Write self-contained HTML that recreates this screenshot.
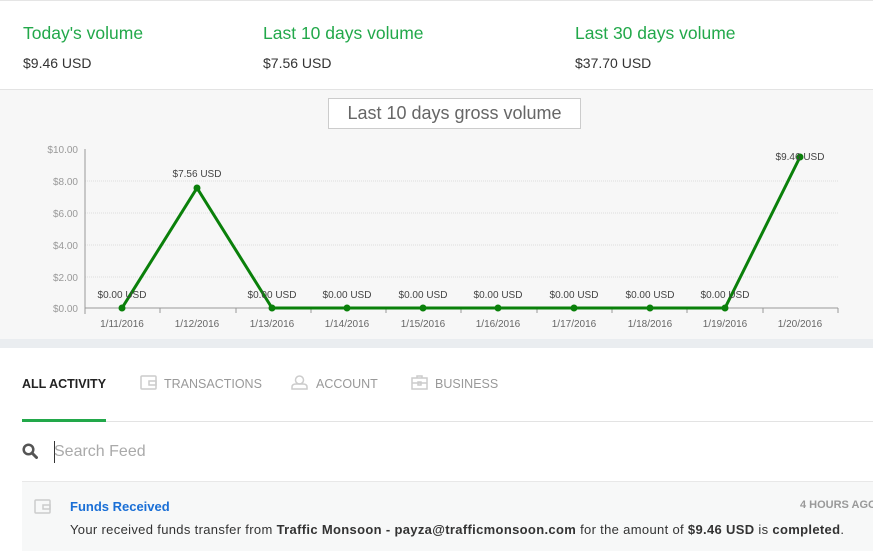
<!DOCTYPE html>
<html><head><style>
*{margin:0;padding:0;box-sizing:border-box}
body{width:873px;height:551px;overflow:hidden;background:#fff;font-family:"Liberation Sans",sans-serif;position:relative}
.a{position:absolute;white-space:nowrap}
.h{color:#22a84a;font-size:17.5px;top:23px}
.v{color:#333;font-size:14px;top:55px}
.tab{top:377px;font-size:12.5px;color:#999}
</style></head><body>
<div style="position:absolute;left:0;top:0;width:873px;height:1px;background:#e5e5e5"></div>
<div class="a h" style="left:23px">Today's volume</div><div class="a v" style="left:23px">$9.46 USD</div>
<div class="a h" style="left:263px">Last 10 days volume</div><div class="a v" style="left:263px">$7.56 USD</div>
<div class="a h" style="left:575px">Last 30 days volume</div><div class="a v" style="left:575px">$37.70 USD</div>
<div style="position:absolute;left:0;top:89px;width:873px;height:250px;background:#f7f7f7;border-top:1px solid #e3e3e3"></div>
<div style="position:absolute;left:0;top:339px;width:873px;height:9px;background:#eaedf0"></div>
<div class="a" style="left:328px;top:98px;width:253px;height:31px;border:1px solid #ccc;background:#fff;color:#666;font-size:18px;text-align:center;line-height:29px">Last 10 days gross volume</div>
<svg class="a" style="left:0;top:0" width="873" height="340" font-family="Liberation Sans,sans-serif" font-size="10">
<g stroke="#ddd" stroke-dasharray="1,1"><line x1="85" x2="838" y1="181" y2="181"/><line x1="85" x2="838" y1="213" y2="213"/><line x1="85" x2="838" y1="245" y2="245"/><line x1="85" x2="838" y1="277" y2="277"/></g>
<g fill="#999" text-anchor="end"><text x="78" y="153">$10.00</text><text x="78" y="185">$8.00</text><text x="78" y="217">$6.00</text><text x="78" y="249">$4.00</text><text x="78" y="281">$2.00</text><text x="78" y="312">$0.00</text></g>
<g stroke="#999"><line x1="85" y1="149" x2="85" y2="314"/><line x1="85" y1="308" x2="838" y2="308"/>
<line x1="160" y1="308" x2="160" y2="313"/><line x1="236" y1="308" x2="236" y2="313"/><line x1="311" y1="308" x2="311" y2="313"/><line x1="386" y1="308" x2="386" y2="313"/><line x1="461" y1="308" x2="461" y2="313"/><line x1="537" y1="308" x2="537" y2="313"/><line x1="612" y1="308" x2="612" y2="313"/><line x1="687" y1="308" x2="687" y2="313"/><line x1="763" y1="308" x2="763" y2="313"/><line x1="838" y1="308" x2="838" y2="313"/></g>
<g fill="#666" text-anchor="middle"><text x="122" y="327">1/11/2016</text><text x="197" y="327">1/12/2016</text><text x="272" y="327">1/13/2016</text><text x="347" y="327">1/14/2016</text><text x="423" y="327">1/15/2016</text><text x="498" y="327">1/16/2016</text><text x="574" y="327">1/17/2016</text><text x="650" y="327">1/18/2016</text><text x="725" y="327">1/19/2016</text><text x="800" y="327">1/20/2016</text></g>
<polyline fill="none" stroke="#0a800a" stroke-width="3" points="122,308 197,188 272,308 347,308 423,308 498,308 574,308 650,308 725,308 800,157"/>
<g fill="#0a800a"><circle cx="122" cy="308" r="3.5"/><circle cx="197" cy="188" r="3.5"/><circle cx="272" cy="308" r="3.5"/><circle cx="347" cy="308" r="3.5"/><circle cx="423" cy="308" r="3.5"/><circle cx="498" cy="308" r="3.5"/><circle cx="574" cy="308" r="3.5"/><circle cx="650" cy="308" r="3.5"/><circle cx="725" cy="308" r="3.5"/><circle cx="800" cy="157" r="3.5"/></g>
<g fill="#444" text-anchor="middle"><text x="122" y="298">$0.00 USD</text><text x="197" y="177">$7.56 USD</text><text x="272" y="298">$0.00 USD</text><text x="347" y="298">$0.00 USD</text><text x="423" y="298">$0.00 USD</text><text x="498" y="298">$0.00 USD</text><text x="574" y="298">$0.00 USD</text><text x="650" y="298">$0.00 USD</text><text x="725" y="298">$0.00 USD</text><text x="800" y="160">$9.46 USD</text></g>
</svg>
<div class="a tab" style="left:22px;color:#222;font-weight:bold">ALL ACTIVITY</div>
<svg class="a" style="left:140px;top:375px" width="17" height="15" fill="none" stroke="#ccc" stroke-width="1.5"><rect x="1" y="1" width="15" height="13" rx="1"/><path d="M9 6h7v4H9z"/></svg>
<div class="a tab" style="left:164px">TRANSACTIONS</div>
<svg class="a" style="left:291px;top:375px" width="17" height="15" fill="none" stroke="#ccc" stroke-width="1.5"><circle cx="8.5" cy="5" r="4"/><path d="M1 14v-2q0-3 4-3h7q4 0 4 3v2z"/></svg>
<div class="a tab" style="left:316px">ACCOUNT</div>
<svg class="a" style="left:411px;top:375px" width="17" height="15" fill="none" stroke="#ccc" stroke-width="1.5"><rect x="1" y="3" width="15" height="11"/><path d="M6 3V1h5v2M1 8h15M7 7h3v3H7z"/></svg>
<div class="a tab" style="left:435px">BUSINESS</div>
<div style="position:absolute;left:22px;top:421px;width:851px;height:1px;background:#e3e3e3"></div>
<div style="position:absolute;left:22px;top:419px;width:84px;height:3px;background:#22a84a"></div>
<svg class="a" style="left:22px;top:443px" width="16" height="16"><circle cx="6.5" cy="6.5" r="4.8" fill="none" stroke="#555" stroke-width="2.5"/><path d="M10 10l4.5 4.5" stroke="#555" stroke-width="3" stroke-linecap="round"/></svg>
<div style="position:absolute;left:54px;top:441px;width:1px;height:22px;background:#333"></div>
<div class="a" style="left:54px;top:443px;font-size:16px;color:#aaa">Search Feed</div>
<div style="position:absolute;left:22px;top:481px;width:851px;height:70px;background:#f7f8f8;border-top:1px solid #e8e8e8"></div>
<svg class="a" style="left:34px;top:499px" width="17" height="15" fill="none" stroke="#ccc" stroke-width="1.5"><rect x="1" y="1" width="15" height="13" rx="1"/><path d="M9 6h7v4H9z"/></svg>
<div class="a" style="left:70px;top:499px;font-size:13px;font-weight:bold;color:#1a6fd6">Funds Received</div>
<div class="a" style="left:800px;top:499px;font-size:11px;font-weight:bold;color:#999">4 HOURS AGO</div>
<div class="a" style="left:70px;top:522px;font-size:13px;color:#333;letter-spacing:0.33px">Your received funds transfer from <b>Traffic Monsoon - payza@trafficmonsoon.com</b> for the amount of <b>$9.46 USD</b> is <b>completed</b>.</div>
</body></html>
